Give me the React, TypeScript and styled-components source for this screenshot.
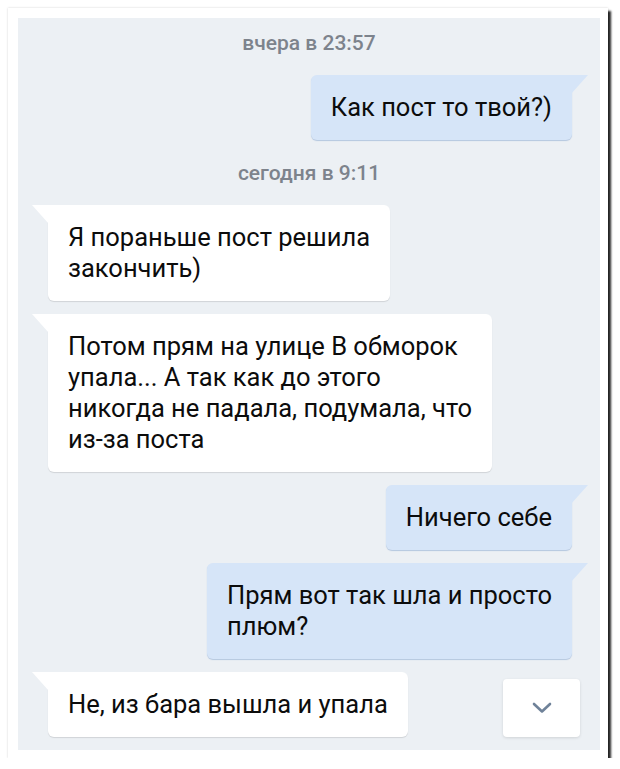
import React from "react";
import styled, { createGlobalStyle, css } from "styled-components";

const GlobalStyle = createGlobalStyle`
  body {
    margin: 0;
    background: #ffffff;
    font-family: Roboto, "Noto Sans", "Liberation Sans", sans-serif;
  }
`;

const Frame = styled.div`
  box-sizing: border-box;
  width: 600px;
  height: 750px;
  margin: 8px 0 0 8px;
  padding: 10px 8px 8px 10px;
  background: #ffffff;
  box-shadow: 3px 3px 2px rgba(0, 0, 0, 0.85), 0 0 2px rgba(0, 0, 0, 0.18);
`;

const Chat = styled.div`
  display: flex;
  flex-direction: column;
  height: 100%;
  padding-top: 13px;
  box-sizing: border-box;
  background: #ecf0f4;
  overflow: hidden;
`;

const Stamp = styled.div`
  text-align: center;
  font-size: 21px;
  font-weight: 500;
  line-height: 25px;
  color: #7d838c;
  margin-bottom: 19px;
`;

const Row = styled.div<{ $out?: boolean; $after?: "stamp" | "bubble" }>`
  display: flex;
  align-items: center;
  justify-content: ${(p) => (p.$out ? "flex-end" : "space-between")};
  padding: ${(p) => (p.$out ? "0 28px 0 0" : "0 20px 0 30px")};
  margin-top: ${(p) => (p.$after === "bubble" ? "13px" : "0")};
  & + ${Stamp} {
    margin-top: 21px;
  }
`;

const Bubble = styled.div<{ $out?: boolean }>`
  position: relative;
  box-sizing: border-box;
  padding: 17px 20px;
  font-size: 25.5px;
  line-height: 31px;
  color: #0c0c0c;
  white-space: nowrap;
  border-radius: 6px;
  ${(p) =>
    p.$out
      ? css`
          background: #d6e5f8;
          border-top-right-radius: 0;
          box-shadow: 0 1px 1px #b4c7df;
          &::before {
            content: "";
            position: absolute;
            top: 0;
            right: -16px;
            width: 17px;
            height: 19px;
            background: #d6e5f8;
            clip-path: polygon(0 0, 100% 0, 0 100%);
          }
        `
      : css`
          background: #ffffff;
          border-top-left-radius: 0;
          box-shadow: 0 1px 1px rgba(0, 0, 0, 0.12);
          &::before {
            content: "";
            position: absolute;
            top: 0;
            left: -16px;
            width: 17px;
            height: 19px;
            background: #ffffff;
            clip-path: polygon(0 0, 100% 0, 100% 100%);
          }
        `}
`;

const DownButton = styled.button`
  display: flex;
  align-items: center;
  justify-content: center;
  width: 77px;
  height: 58px;
  margin-top: 6px;
  padding: 0;
  border: 0;
  border-radius: 4px;
  background: #ffffff;
  box-shadow: 0 1px 3px rgba(0, 0, 0, 0.12);
  cursor: pointer;
`;

type Msg = { out?: boolean; lines: string[] };

const first: Msg[] = [{ out: true, lines: ["Как пост то твой?)"] }];

const second: Msg[] = [
  { lines: ["Я пораньше пост решила", "закончить)"] },
  {
    lines: [
      "Потом прям на улице В обморок",
      "упала... А так как до этого",
      "никогда не падала, подумала, что",
      "из-за поста",
    ],
  },
  { out: true, lines: ["Ничего себе"] },
  { out: true, lines: ["Прям вот так шла и просто", "плюм?"] },
];

function Text({ lines }: { lines: string[] }) {
  return (
    <>
      {lines.map((l, i) => (
        <React.Fragment key={i}>
          {i > 0 && <br />}
          {l}
        </React.Fragment>
      ))}
    </>
  );
}

export default function App() {
  return (
    <>
      <GlobalStyle />
      <Frame>
        <Chat>
          <Stamp>вчера в 23:57</Stamp>
          {first.map((m, i) => (
            <Row key={i} $out={m.out} $after={i > 0 ? "bubble" : "stamp"}>
              <Bubble $out={m.out}>
                <Text lines={m.lines} />
              </Bubble>
            </Row>
          ))}
          <Stamp>сегодня в 9:11</Stamp>
          {second.map((m, i) => (
            <Row key={i} $out={m.out} $after={i > 0 ? "bubble" : "stamp"}>
              <Bubble $out={m.out}>
                <Text lines={m.lines} />
              </Bubble>
            </Row>
          ))}
          <Row $after="bubble">
            <Bubble>Не, из бара вышла и упала</Bubble>
            <DownButton aria-label="Вниз">
              <svg width="20" height="12" viewBox="0 0 20 12" fill="none">
                <polyline
                  points="2,2 10,9.5 18,2"
                  stroke="#6f8299"
                  strokeWidth="2.6"
                  strokeLinecap="round"
                  strokeLinejoin="round"
                />
              </svg>
            </DownButton>
          </Row>
        </Chat>
      </Frame>
    </>
  );
}
